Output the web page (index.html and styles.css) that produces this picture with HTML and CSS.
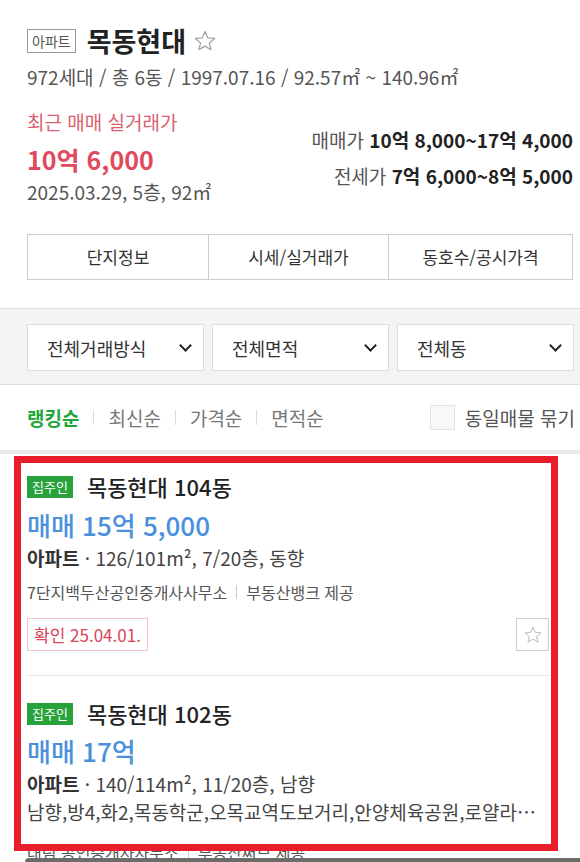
FILE: index.html
```html
<!DOCTYPE html>
<html lang="ko">
<head>
    <meta charset="UTF-8">
    <meta name="viewport" content="width=device-width, initial-scale=1.0">
    <title>목동현대</title>
    <link rel="stylesheet" href="styles.css">
</head>
<body>
    <div class="summary">
        <div class="title-row">
            <span class="type-badge">아파트</span>
            <h1 class="title">목동현대</h1>
            <svg class="fav" width="24" height="24" viewBox="0 0 24 24"><path d="M12 2.5l2.8 6.3 6.8.6-5.2 4.5 1.6 6.7L12 17.1l-6 3.5 1.6-6.7-5.2-4.5 6.8-.6z" fill="none" stroke="#a5a5a5" stroke-width="1.3" stroke-linejoin="round"/></svg>
        </div>
        <div class="meta">972세대 / 총 6동 / 1997.07.16 / 92.57㎡ ~ 140.96㎡</div>

        <div class="price-row">
            <div class="recent">
                <div class="recent-label">최근 매매 실거래가</div>
                <div class="recent-price">10억 6,000</div>
                <div class="recent-date">2025.03.29, 5층, 92㎡</div>
            </div>
            <div class="ranges">
                <div>매매가 <strong>10억 8,000~17억 4,000</strong></div>
                <div>전세가 <strong>7억 6,000~8억 5,000</strong></div>
            </div>
        </div>

        <div class="tabs">
            <a class="tab">단지정보</a>
            <a class="tab">시세/실거래가</a>
            <a class="tab">동호수/공시가격</a>
        </div>
    </div>

    <div class="filters">
        <div class="select">전체거래방식 <span class="chev"></span></div>
        <div class="select">전체면적 <span class="chev"></span></div>
        <div class="select">전체동 <span class="chev"></span></div>
    </div>

    <div class="sort">
        <div class="sort-list">
            <span class="on">랭킹순</span><i></i><span>최신순</span><i></i><span>가격순</span><i></i><span>면적순</span>
        </div>
        <label class="group"><span class="box"></span>동일매물 묶기</label>
    </div>

    <div class="listings">
        <div class="item">
            <div class="item-head"><span class="owner">집주인</span><span class="item-name">목동현대 104동</span></div>
            <div class="item-price">매매 15억 5,000</div>
            <div class="item-spec"><b>아파트</b> · 126/101m², 7/20층, 동향</div>
            <div class="item-agent">7단지백두산공인중개사사무소<i></i>부동산뱅크 제공</div>
            <div class="item-foot">
                <span class="confirm">확인 25.04.01.</span>
                <span class="star-btn"><svg width="20" height="20" viewBox="0 0 24 24"><path d="M12 2.5l2.8 6.3 6.8.6-5.2 4.5 1.6 6.7L12 17.1l-6 3.5 1.6-6.7-5.2-4.5 6.8-.6z" fill="none" stroke="#bbb" stroke-width="1.2" stroke-linejoin="round"/></svg></span>
            </div>
        </div>
        <div class="item">
            <div class="item-head"><span class="owner">집주인</span><span class="item-name">목동현대 102동</span></div>
            <div class="item-price">매매 17억</div>
            <div class="item-spec"><b>아파트</b> · 140/114m², 11/20층, 남향</div>
            <div class="item-desc">남향,방4,화2,목동학군,오목교역도보거리,안양체육공원,로얄라인,올수리</div>
            <div class="item-agent">대림 공인중개사사무소<i></i>부동산써브 제공</div>
        </div>
    </div>

    <div class="highlight"></div>
    <div class="bottom-bar"></div>
</body>
</html>
```

FILE: styles.css
```css
body {
    margin: 0;
    width: 580px;
    height: 862px;
    overflow: hidden;
    position: relative;
    font-family: "Noto Sans CJK KR", "Noto Sans", sans-serif;
    color: #222;
    background-color: #fff;
}
.summary {
    padding: 27px 7px 28px 27px;
}
.title-row {
    display: flex;
    align-items: center;
    height: 28px;
}
.type-badge {
    border: 1px solid #999;
    color: #555;
    font-size: 14px;
    line-height: 22px;
    padding: 0 4px;
}
.title {
    margin: 0 7px 0 11px;
    font-size: 27px;
    font-weight: 700;
    line-height: 28px;
}
.meta {
    margin-top: 10px;
    font-size: 19px;
    line-height: 24px;
    color: #555;
}
.price-row {
    display: flex;
    justify-content: space-between;
    margin-top: 21px;
}
.recent-label {
    font-size: 19px;
    line-height: 24px;
    color: #d9606d;
}
.recent-price {
    margin-top: 9px;
    font-size: 25px;
    font-weight: 700;
    line-height: 32px;
    color: #e04a5c;
}
.recent-date {
    margin-top: 5px;
    font-size: 19px;
    line-height: 24px;
    color: #555;
}
.ranges {
    margin-top: 12px;
    text-align: right;
    font-size: 19px;
    line-height: 36px;
    color: #555;
}
.ranges strong {
    color: #222;
    font-weight: 700;
}
.tabs {
    display: grid;
    grid-template-columns: 180px 180px 1fr;
    margin-top: 30px;
    border: 1px solid #ccc;
}
.tab {
    height: 44px;
    line-height: 44px;
    text-align: center;
    font-size: 17px;
    color: #333;
}
.tab + .tab {
    border-left: 1px solid #ccc;
}
.filters {
    display: grid;
    grid-template-columns: 177px 177px 177px;
    gap: 8px;
    padding: 15px 8px 13px 27px;
    background-color: #f4f4f4;
    border-top: 1px solid #ddd;
    border-bottom: 1px solid #ddd;
}
.select {
    display: flex;
    justify-content: space-between;
    align-items: center;
    height: 45px;
    padding: 0 13px 0 19px;
    background-color: #fff;
    border: 1px solid #ddd;
    font-size: 18px;
    color: #333;
}
.chev {
    width: 7px;
    height: 7px;
    border-right: 2px solid #222;
    border-bottom: 2px solid #222;
    transform: rotate(45deg);
    margin-top: -5px;
}
.sort {
    display: flex;
    justify-content: space-between;
    align-items: center;
    height: 65px;
    padding: 0 5px 0 27px;
    border-bottom: 4px solid #ebebeb;
}
.sort-list {
    display: flex;
    align-items: center;
    font-size: 19px;
    color: #777;
}
.sort-list .on {
    color: #1ea83a;
    font-weight: 700;
}
.sort-list i {
    width: 1px;
    height: 15px;
    margin: 0 14px;
    background-color: #ddd;
}
.group {
    display: flex;
    align-items: center;
    font-size: 19px;
    color: #555;
}
.box {
    width: 23px;
    height: 23px;
    margin-right: 10px;
    border: 1px solid #e3e3e3;
    background-color: #f8f8f8;
}
.listings {
    padding: 0 31px 0 27px;
}
.item {
    padding: 21px 0 24px;
}
.item + .item {
    border-top: 1px solid #e5e5e5;
    padding-top: 26px;
}
.item-head {
    display: flex;
    align-items: center;
    height: 23px;
}
.owner {
    background-color: #28a33b;
    color: #fff;
    font-size: 13px;
    line-height: 22px;
    padding: 0 5px;
}
.item-name {
    margin-left: 14px;
    font-size: 22px;
    font-weight: 500;
    line-height: 23px;
}
.item-price {
    margin-top: 12px;
    font-size: 26px;
    font-weight: 500;
    line-height: 30px;
    color: #4a90dc;
}
.item + .item .item-price {
    margin-top: 11px;
}
.item-spec {
    margin-top: 5px;
    font-size: 19px;
    line-height: 26px;
    color: #444;
}
.item-spec b {
    color: #333;
}
.item-desc {
    margin-top: 2px;
    font-size: 19px;
    line-height: 26px;
    color: #444;
    white-space: nowrap;
    overflow: hidden;
    text-overflow: ellipsis;
}
.item-agent {
    display: flex;
    align-items: center;
    margin-top: 10px;
    font-size: 16px;
    line-height: 22px;
    color: #555;
}
.item-desc + .item-agent {
    margin-top: 16px;
}
.item-agent i {
    width: 1px;
    height: 14px;
    margin: 0 9px;
    background-color: #ccc;
}
.item-foot {
    display: flex;
    justify-content: space-between;
    margin-top: 15px;
}
.confirm {
    height: 31px;
    line-height: 31px;
    padding: 0 6px;
    border: 1px solid #f2c4c9;
    font-size: 17px;
    color: #d9435a;
}
.star-btn {
    display: flex;
    align-items: center;
    justify-content: center;
    width: 31px;
    height: 31px;
    border: 1px solid #ccc;
}
.highlight {
    position: absolute;
    left: 14px;
    top: 456px;
    width: 530px;
    height: 381px;
    border: 7px solid #e81f2a;
}
.bottom-bar {
    position: absolute;
    left: 25px;
    right: 0;
    bottom: 0;
    height: 4px;
    background-color: #6b6b6b;
    border-radius: 4px 0 0 0;
}
```
